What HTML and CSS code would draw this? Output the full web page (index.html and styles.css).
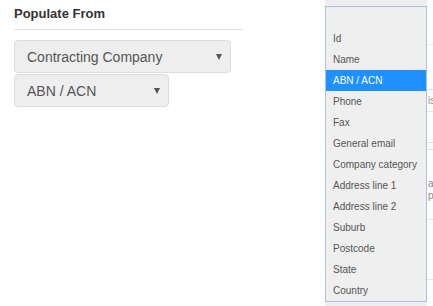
FILE: index.html
```html
<!DOCTYPE html>
<html lang="en">
<head>
  <meta charset="UTF-8">
  <title>Populate From</title>
  <link rel="stylesheet" href="styles.css">
</head>
<body>

<div class="page">
  <div class="left">
    <h3 class="heading">Populate From</h3>
    <div class="select select-wide">
      <span>Contracting Company</span>
      <i class="arrow"></i>
    </div>
    <div class="select select-narrow">
      <span>ABN / ACN</span>
      <i class="arrow"></i>
    </div>
  </div>

  <div class="right">
    <div class="field-col">
      <div class="field-top"></div>
      <div class="field-bottom"></div>
    </div>
    <div class="behind">
      <div class="row r1"></div>
      <div class="row r2"></div>
      <div class="row r3"><span class="frag">is</span></div>
      <div class="row r4"></div>
      <div class="row r5"></div>
      <div class="row r6"><span class="frag">al</span><span class="frag">pr</span></div>
      <div class="row r7"></div>
    </div>

    <ul class="list">
      <li></li>
      <li>Id</li>
      <li>Name</li>
      <li class="active">ABN / ACN</li>
      <li>Phone</li>
      <li>Fax</li>
      <li>General email</li>
      <li>Company category</li>
      <li>Address line 1</li>
      <li>Address line 2</li>
      <li>Suburb</li>
      <li>Postcode</li>
      <li>State</li>
      <li>Country</li>
    </ul>
  </div>
</div>

</body>
</html>
```

FILE: styles.css
```css
* {
  box-sizing: border-box;
}
body {
  margin: 0;
  font-family: "Liberation Sans", Arial, sans-serif;
  background: #fff;
  overflow: hidden;
}

.page {
  display: flex;
  height: 306px;
}

.left {
  flex-shrink: 0;
  width: 243px;
  padding: 6px 0 0 14px;
}

.heading {
  margin: 0;
  font-size: 13px;
  line-height: 16px;
  font-weight: bold;
  color: #333;
  padding-bottom: 7px;
  border-bottom: 1px solid #e3e3e3;
}

.select {
  display: flex;
  align-items: center;
  justify-content: space-between;
  height: 33px;
  padding: 0 8px 0 12px;
  background-color: #eee;
  border: 1px solid #dcdcdc;
  border-radius: 4px;
  font-size: 14px;
  color: #555;
}

.select-wide {
  width: 217px;
  margin-top: 10px;
}

.select-narrow {
  width: 155px;
  margin-top: 1px;
}

.arrow {
  width: 0;
  height: 0;
  border-left: 3.5px solid transparent;
  border-right: 3.5px solid transparent;
  border-top: 6px solid #555;
  margin-top: 1px;
}

.right {
  position: relative;
  flex: 1;
  min-width: 0;
  margin-left: 82px;
  display: flex;
  overflow: hidden;
}

.field-col {
  flex-shrink: 0;
  width: 102px;
  display: flex;
  flex-direction: column;
  justify-content: space-between;
}

.field-top {
  height: 6px;
  background: #eee;
}

.field-bottom {
  height: 6px;
  background: #eee;
}

.behind {
  flex: 1;
  display: flex;
  flex-direction: column;
  font-size: 10px;
  color: #888;
}

.row {
  border-bottom: 1px solid #e6e6e6;
  white-space: nowrap;
  padding-left: 1px;
}

.r1 { height: 45px; border-bottom-color: #eee; }
.r2 { height: 45px; }
.r3 { height: 22px; padding-top: 5px; }
.r4 { height: 31px; }
.r5 { height: 7px; }
.r6 { height: 70px; padding-top: 28px; display: flex; flex-direction: column; line-height: 12px; }
.r7 { height: 60px; }

.frag {
  display: block;
}

.list {
  position: absolute;
  top: 6px;
  left: 0;
  width: 102px;
  margin: 0;
  padding: 0;
  list-style: none;
  background: #efefef;
  border: 1px solid #a8bfe6;
}

.list li {
  height: 21px;
  line-height: 21px;
  padding-left: 7px;
  font-size: 10px;
  color: #555;
  white-space: nowrap;
}

.list li.active {
  background: #1e90ff;
  color: #fff;
}
```
